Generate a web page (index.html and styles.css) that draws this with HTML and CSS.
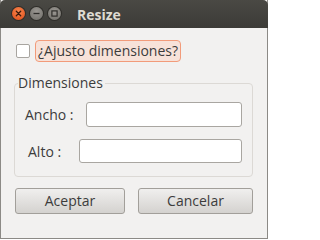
FILE: index.html
```html
<!DOCTYPE html>
<html>
<head>
<meta charset="utf-8">
<link rel="stylesheet" href="styles.css">
</head>
<body>
<div class="window">
  <div class="titlebar">
    <div class="controls">
      <span class="wbtn close"><svg width="13" height="13" viewBox="0 0 13 13"><path d="M4.3 4.3 L8.7 8.7 M8.7 4.3 L4.3 8.7" stroke="#3a1a0c" stroke-width="1.3" stroke-linecap="round"/></svg></span>
      <span class="wbtn"><svg width="13" height="13" viewBox="0 0 13 13"><path d="M3.5 6.5 H9.5" stroke="#2e2d2a" stroke-width="1.3"/></svg></span>
      <span class="wbtn"><svg width="13" height="13" viewBox="0 0 13 13"><rect x="3.9" y="3.9" width="5.2" height="5.2" fill="none" stroke="#2e2d2a" stroke-width="1.2"/></svg></span>
    </div>
    <div class="title">Resize</div>
  </div>
  <div class="content">
    <div class="check-row">
      <span class="checkbox"></span>
      <span class="check-label">¿Ajusto dimensiones?</span>
    </div>
    <div class="frame">
      <div class="legend"><span class="legend-text">Dimensiones</span></div>
      <div class="frame-box">
        <div class="field ancho"><span class="flabel">Ancho :</span><span class="entry"></span></div>
        <div class="field alto"><span class="flabel">Alto :</span><span class="entry"></span></div>
      </div>
    </div>
    <div class="buttons">
      <span class="btn aceptar">Aceptar</span>
      <span class="btn cancelar">Cancelar</span>
    </div>
  </div>
</div>
</body>
</html>
```
FILE: styles.css
```css
html, body {
  margin: 0;
  padding: 0;
  background: #ffffff;
}
.window {
  width: 268px;
  height: 239px;
  box-sizing: border-box;
  border-left: 1px solid #8c8a86;
  border-right: 1px solid #8c8a86;
  border-bottom: 1px solid #8c8a86;
  background: #f2f1f0;
  font-family: "Open Sans", "DejaVu Sans", sans-serif;
  color: #3c3c3c;
  display: flex;
  flex-direction: column;
}
.titlebar {
  height: 28px;
  margin: 0 -1px;
  background: linear-gradient(#4a4944, #3c3b37);
  border-radius: 5px 5px 0 0;
  display: flex;
  align-items: center;
  padding-left: 12px;
}
.controls {
  display: flex;
  gap: 5px;
  margin-top: -1px;
}
.wbtn {
  width: 13px;
  height: 13px;
  border-radius: 50%;
  background: radial-gradient(circle at 50% 35%, #9a9792, #6e6c67);
  box-shadow: 0 0 0 1px #2e2d29;
  display: flex;
}
.wbtn.close {
  background: radial-gradient(circle at 50% 35%, #f7874f, #df4a16);
}
.title {
  margin-left: 16px;
  font-weight: bold;
  font-size: 14px;
  color: #dfdbd2;
}
.content {
  padding: 12px 14px 0 13px;
  display: flex;
  flex-direction: column;
}
.check-row {
  display: flex;
  align-items: center;
  height: 22px;
}
.checkbox {
  width: 12px;
  height: 12px;
  margin-left: 2px;
  border: 1px solid #a8a5a0;
  border-radius: 2px;
  background: #ffffff;
}
.check-label {
  margin-left: 5px;
  height: 20px;
  padding: 0 2px;
  border: 1px solid #f29b7a;
  border-radius: 4px;
  background: #f7e2d9;
  font-size: 14px;
  line-height: 20px;
}
.frame {
  margin-top: 13px;
}
.legend {
  font-size: 14px;
  line-height: 16px;
  padding-left: 4px;
  height: 16px;
  position: relative;
  z-index: 1;
}
.legend-text {
  background: #f2f1f0;
  padding-right: 2px;
}
.frame-box {
  margin-top: -8px;
  height: 94px;
  box-sizing: border-box;
  border: 1px solid #dcd9d5;
  border-radius: 4px;
  padding: 18px 10px 0 0;
  display: flex;
  flex-direction: column;
  gap: 12px;
}
.field {
  display: flex;
  align-items: center;
}
.flabel {
  font-size: 14px;
  white-space: nowrap;
}
.ancho .flabel {
  margin-left: 10px;
  width: 61px;
}
.alto .flabel {
  margin-left: 13px;
  width: 51px;
}
.entry {
  flex: 1;
  height: 25px;
  box-sizing: border-box;
  border: 1px solid #a9a6a1;
  border-radius: 3px;
  background: #ffffff;
}
.alto .entry {
  height: 24px;
}
.buttons {
  margin-top: 11px;
  display: flex;
  gap: 13px;
  margin-left: 1px;
}
.btn {
  height: 26px;
  box-sizing: border-box;
  border: 1px solid #a29f9a;
  border-radius: 3px;
  background: linear-gradient(#f0efee, #d4d2cf);
  font-size: 14px;
  line-height: 24px;
  text-align: center;
}
.aceptar { width: 111px; }
.cancelar { width: 116px; }
```
